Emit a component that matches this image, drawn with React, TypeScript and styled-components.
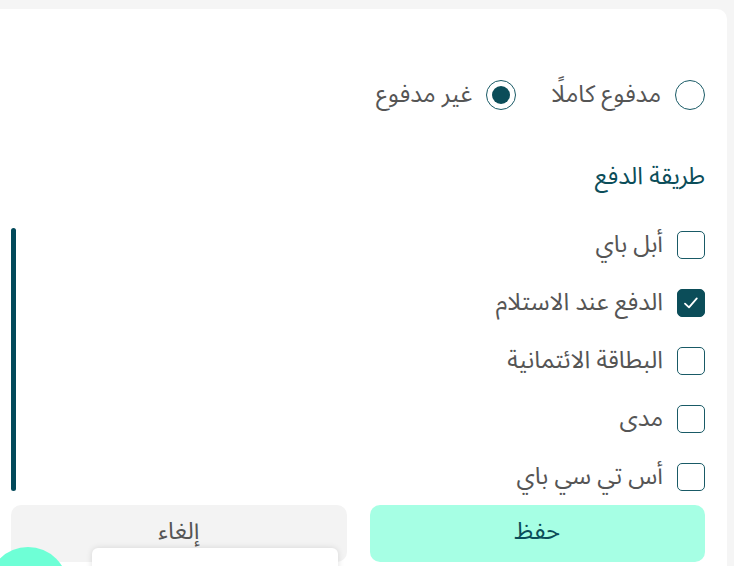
import React, { useState } from "react";
import styled, { createGlobalStyle } from "styled-components";

const GlobalStyle = createGlobalStyle`
  html, body {
    margin: 0;
    padding: 0;
    background: #f5f5f5;
    overflow: hidden;
  }
  * {
    box-sizing: border-box;
  }
`;

const FONT = `"Noto Sans Arabic", "DejaVu Sans", "Noto Sans", sans-serif`;
const TEAL = "#0b4d59";

const Page = styled.div`
  position: relative;
  height: 566px;
  overflow: hidden;
  padding: 9px 7px 0 0;
  font-family: ${FONT};
`;

const Card = styled.div`
  height: 557px;
  background: #fff;
  border-radius: 0 10px 0 0;
  direction: rtl;
  padding: 71px 22px 0 11px;
  display: flex;
  flex-direction: column;
`;

const RadioGroup = styled.div`
  display: flex;
  gap: 35px;
  height: 30px;
`;

const Option = styled.label`
  display: flex;
  align-items: center;
  gap: 14px;
  cursor: pointer;
`;

const RadioCircle = styled.span<{ $checked: boolean }>`
  flex: none;
  width: 30px;
  height: 30px;
  border-radius: 50%;
  border: 1.5px solid #195a66;
  display: flex;
  align-items: center;
  justify-content: center;

  &::after {
    content: "";
    width: 18px;
    height: 18px;
    border-radius: 50%;
    background: ${TEAL};
    display: ${(p) => (p.$checked ? "block" : "none")};
  }
`;

const Label = styled.span`
  font-size: 24px;
  line-height: 30px;
  color: #555;
  white-space: nowrap;
`;

const Heading = styled.h3`
  margin: 52px 0 0;
  font-size: 24px;
  font-weight: 400;
  line-height: 30px;
  color: ${TEAL};
`;

const ListArea = styled.div`
  margin-top: 39px;
  display: flex;
  align-items: stretch;
`;

const List = styled.div`
  flex: 1;
  display: flex;
  flex-direction: column;
  gap: 30px;
`;

const Row = styled.label`
  display: flex;
  align-items: center;
  gap: 14px;
  height: 28px;
  cursor: pointer;
`;

const Box = styled.span<{ $checked: boolean }>`
  flex: none;
  width: 28px;
  height: 28px;
  border-radius: 5px;
  border: 1.5px solid ${(p) => (p.$checked ? TEAL : "#195a66")};
  background: ${(p) => (p.$checked ? TEAL : "#fff")};
  display: flex;
  align-items: center;
  justify-content: center;
`;

const Thumb = styled.div`
  width: 5px;
  margin-top: -3px;
  border-radius: 3px;
  background: #02495a;
`;

const Actions = styled.div`
  margin-top: 14px;
  display: flex;
  gap: 23px;
`;

const Button = styled.button<{ $primary?: boolean }>`
  flex: 1;
  height: 57px;
  border: none;
  border-radius: 10px;
  font-family: ${FONT};
  font-size: 24px;
  background: ${(p) => (p.$primary ? "#a6ffe4" : "#f3f3f3")};
  color: ${(p) => (p.$primary ? TEAL : "#555")};
  padding: 0 0 4px;
  cursor: pointer;
`;

const Bubble = styled.div`
  position: absolute;
  left: -12px;
  top: 547px;
  width: 80px;
  height: 80px;
  border-radius: 50%;
  background: #6effd6;
`;

const Toast = styled.div`
  position: absolute;
  left: 92px;
  top: 548px;
  width: 246px;
  height: 40px;
  background: #fff;
  border-radius: 6px;
  box-shadow: 0 0 6px rgba(0, 0, 0, 0.12);
`;

const Check = () => (
  <svg width="18" height="18" viewBox="0 0 18 18" fill="none">
    <path
      d="M3 9.6 L7 13.4 L14.8 4.4"
      stroke="#fff"
      strokeWidth="1.8"
      strokeLinecap="round"
      strokeLinejoin="round"
    />
  </svg>
);

const methods = [
  "أبل باي",
  "الدفع عند الاستلام",
  "البطاقة الائتمانية",
  "مدى",
  "أس تي سي باي",
];

const App = () => {
  const [paid, setPaid] = useState("unpaid");
  const [selected, setSelected] = useState<string[]>(["الدفع عند الاستلام"]);

  const toggle = (m: string) =>
    setSelected((s) => (s.includes(m) ? s.filter((x) => x !== m) : [...s, m]));

  return (
    <Page>
      <GlobalStyle />
      <Card>
        <RadioGroup>
          <Option onClick={() => setPaid("full")}>
            <RadioCircle $checked={paid === "full"} />
            <Label>مدفوع كاملًا</Label>
          </Option>
          <Option onClick={() => setPaid("unpaid")}>
            <RadioCircle $checked={paid === "unpaid"} />
            <Label>غير مدفوع</Label>
          </Option>
        </RadioGroup>
        <Heading>طريقة الدفع</Heading>
        <ListArea>
          <List>
            {methods.map((m) => {
              const on = selected.includes(m);
              return (
                <Row key={m} onClick={() => toggle(m)}>
                  <Box $checked={on}>{on && <Check />}</Box>
                  <Label>{m}</Label>
                </Row>
              );
            })}
          </List>
          <Thumb />
        </ListArea>
        <Actions>
          <Button $primary>حفظ</Button>
          <Button>إلغاء</Button>
        </Actions>
      </Card>
      <Bubble />
      <Toast />
    </Page>
  );
};

export default App;
